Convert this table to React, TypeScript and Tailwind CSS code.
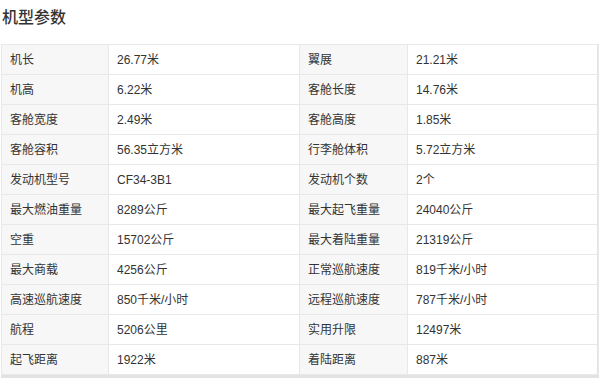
import React from 'react';

const rows: [string, string, string, string][] = [
  ['机长', '26.77米', '翼展', '21.21米'],
  ['机高', '6.22米', '客舱长度', '14.76米'],
  ['客舱宽度', '2.49米', '客舱高度', '1.85米'],
  ['客舱容积', '56.35立方米', '行李舱体积', '5.72立方米'],
  ['发动机型号', 'CF34-3B1', '发动机个数', '2个'],
  ['最大燃油重量', '8289公斤', '最大起飞重量', '24040公斤'],
  ['空重', '15702公斤', '最大着陆重量', '21319公斤'],
  ['最大商载', '4256公斤', '正常巡航速度', '819千米/小时'],
  ['高速巡航速度', '850千米/小时', '远程巡航速度', '787千米/小时'],
  ['航程', '5206公里', '实用升限', '12497米'],
  ['起飞距离', '1922米', '着陆距离', '887米'],
];

const App = () => {
  return (
    <div
      className="w-[600px] h-[379px] bg-white text-[#333] overflow-hidden"
      style={{ fontFamily: '"Liberation Sans", "Noto Sans CJK SC", sans-serif' }}
    >
      <h2 className="h-[36px] pt-[8px] pl-[2px] text-[16px] leading-[20px] font-medium">机型参数</h2>
      <div className="mt-[8px] ml-[1px] w-[598px] border-r-2 border-b-[3px] border-[#e3e3e3]">
        <table className="w-[597px] border-collapse text-[12px] table-fixed">
          <colgroup>
            <col className="w-[107px]" />
            <col className="w-[191px]" />
            <col className="w-[108px]" />
            <col className="w-[191px]" />
          </colgroup>
          <tbody>
            {rows.map((r) => (
              <tr key={r[0]} className="h-[30px]">
                <td className="border border-[#e8e8e8] bg-[#f7f7f7] pl-[8px]">{r[0]}</td>
                <td className="border border-[#e8e8e8] pl-[8px]">{r[1]}</td>
                <td className="border border-[#e8e8e8] bg-[#f7f7f7] pl-[8px]">{r[2]}</td>
                <td className="border border-[#e8e8e8] pl-[8px]">{r[3]}</td>
              </tr>
            ))}
          </tbody>
        </table>
      </div>
    </div>
  );
};

export default App;
